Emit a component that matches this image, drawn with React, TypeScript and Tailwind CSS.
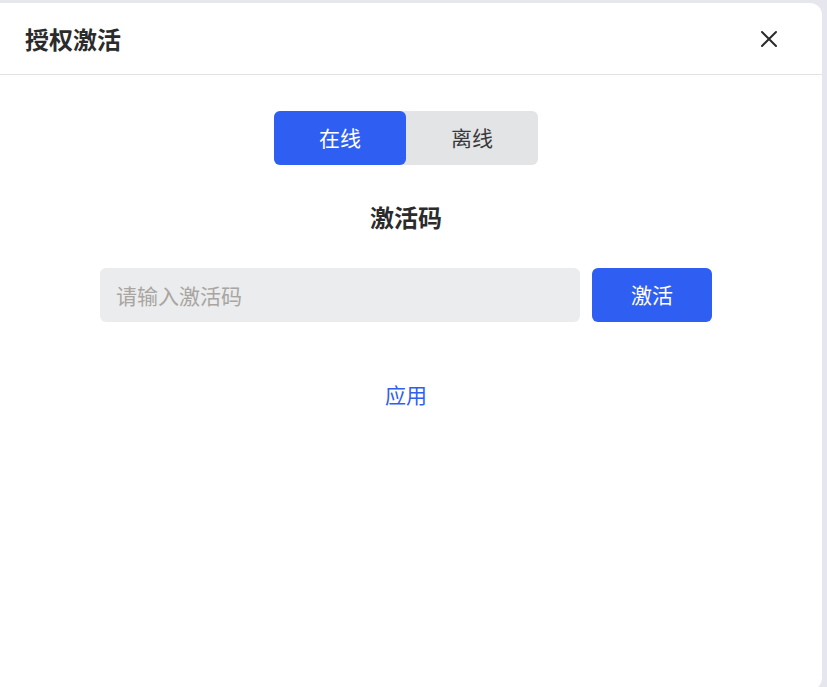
import { useState } from "react";

const font = { fontFamily: '"Noto Sans CJK SC", "Noto Sans", sans-serif' };

function CloseIcon() {
  return (
    <svg width="18" height="18" viewBox="0 0 18 18" fill="none">
      <path d="M2 2L16 16M16 2L2 16" stroke="#2b2b2b" strokeWidth="2" strokeLinecap="round" />
    </svg>
  );
}

export default function App() {
  const [mode, setMode] = useState<"online" | "offline">("online");
  const [code, setCode] = useState("");

  return (
    <div className="w-[827px] h-[687px] overflow-hidden bg-[#e6e6ee] pt-[3px] pr-[5px]" style={font}>
      <div className="h-[687px] bg-white rounded-r-[12px] flex flex-col">
        <div className="h-[72px] flex items-center justify-between pl-[25px] pr-[41px] border-b border-[#e2e2e4]">
          <h1 className="text-[24px] font-bold text-[#2b2b2b] leading-none">授权激活</h1>
          <button className="w-[24px] h-[24px] flex items-center justify-center">
            <CloseIcon />
          </button>
        </div>

        <div className="w-[812px] flex flex-col items-center">
          <div className="mt-[36px] flex rounded-[6px] bg-[#e3e4e6]">
            <button
              onClick={() => setMode("online")}
              className={
                mode === "online"
                  ? "w-[132px] h-[54px] rounded-[6px] bg-[#2f5ef2] text-white text-[21px]"
                  : "w-[132px] h-[54px] rounded-[6px] text-[#3a3a3a] text-[21px]"
              }
            >
              在线
            </button>
            <button
              onClick={() => setMode("offline")}
              className={
                mode === "offline"
                  ? "w-[132px] h-[54px] rounded-[6px] bg-[#2f5ef2] text-white text-[21px]"
                  : "w-[132px] h-[54px] rounded-[6px] text-[#3a3a3a] text-[21px]"
              }
            >
              离线
            </button>
          </div>

          <div className="mt-[36px] text-[24px] font-bold text-[#2b2b2b] leading-[32px]">激活码</div>

          <div className="mt-[35px] flex gap-[12px]">
            <input
              value={code}
              onChange={(e) => setCode(e.target.value)}
              placeholder="请输入激活码"
              className="w-[480px] h-[54px] rounded-[6px] bg-[#ebeced] px-[16px] text-[21px] text-[#333] placeholder:text-[#a8a5a2] outline-none"
            />
            <button className="w-[120px] h-[54px] rounded-[6px] bg-[#2f5ef2] text-white text-[21px]">激活</button>
          </div>

          <button className="mt-[57px] text-[21px] text-[#2f5ef2] leading-[30px]">应用</button>
        </div>
      </div>
    </div>
  );
}
